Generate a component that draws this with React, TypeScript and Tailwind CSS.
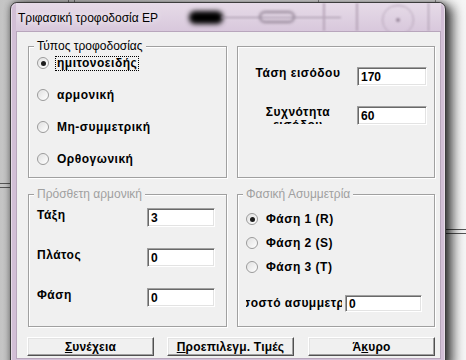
const sans = "font-['Liberation_Sans',Arial,sans-serif]";

function Radio({ checked }: { checked?: boolean }) {
  return (
    <span className="flex h-[12px] w-[12px] shrink-0 items-center justify-center rounded-full border border-[#9a9a9a] bg-gradient-to-br from-[#e0e0e0] to-white shadow-[inset_0_0_1px_#fff]">
      {checked && <span className="h-[5px] w-[5px] rounded-full bg-[#1c1c1c]" />}
    </span>
  );
}

function RadioRow({ label, checked, focused }: { label: string; checked?: boolean; focused?: boolean }) {
  return (
    <div className="flex h-[14px] items-center gap-[6px]">
      <Radio checked={checked} />
      <span
        className={`border px-[1px] text-[12px] font-bold leading-[13px] tracking-[0.5px] ${
          focused ? "border-dotted border-black" : "border-transparent"
        }`}
      >
        {label}
      </span>
    </div>
  );
}

function Field({ value, className }: { value: string; className: string }) {
  return (
    <div
      className={`flex items-center border border-t-[#a0a0a0] border-l-[#a0a0a0] border-b-white border-r-white bg-white pl-[3px] text-[12px] font-bold shadow-[inset_1px_1px_0_#696969,inset_-1px_-1px_0_#e3e3e3] ${className}`}
    >
      {value}
    </div>
  );
}

function Group({
  title,
  disabled,
  className,
  children,
}: {
  title?: string;
  disabled?: boolean;
  className: string;
  children: React.ReactNode;
}) {
  return (
    <div className={`relative border border-[#a0a0a0] shadow-[inset_1px_1px_0_#fff,1px_1px_0_#fff] ${className}`}>
      {title && (
        <span
          className={`absolute -top-[8px] left-[5px] bg-[#f0f0f0] px-[3px] text-[12px] leading-[14px] ${
            disabled ? "text-[#a0a0a0]" : "text-black"
          }`}
        >
          {title}
        </span>
      )}
      {children}
    </div>
  );
}

function Button({ children, className }: { children: React.ReactNode; className?: string }) {
  return (
    <div
      className={`flex h-[19px] w-[127px] items-center justify-center border border-t-white border-l-white border-b-[#505050] border-r-[#505050] bg-[#f0f0f0] text-[12px] font-bold tracking-[0.2px] shadow-[inset_-1px_-1px_0_#a0a0a0,inset_1px_1px_0_#e3e3e3] ${className ?? ""}`}
    >
      {children}
    </div>
  );
}

export default function App() {
  return (
    <div className={`relative h-[360px] w-[466px] overflow-hidden bg-gradient-to-r from-[#c4c4c4] via-[#f2f2f2] to-[#f6f6f6] ${sans} text-black`}>
      {/* desktop behind the dialog */}
      <div className="absolute left-[68px] top-0 h-[4px] w-[1px] bg-[#777]" />
      <div className="absolute left-[74px] top-0 h-[4px] w-[1px] bg-[#777]" />
      <div className="absolute left-[318px] top-0 h-[4px] w-[1px] bg-[#999]" />
      <div className="absolute left-[435px] top-0 h-[4px] w-[1px] bg-[#999]" />
      <div className="absolute left-0 top-[183px] h-[1px] w-[12px] bg-[#555]" />
      <div className="absolute left-0 top-[187px] h-[1px] w-[12px] bg-[#555]" />
      <div className="absolute right-0 top-[229px] h-[1px] w-[20px] bg-[#555]" />
      <div className="absolute right-0 top-[233px] h-[1px] w-[20px] bg-[#555]" />

      {/* window */}
      <div className="absolute left-[10px] top-[2px] flex h-[364px] w-[436px] flex-col rounded-t-[7px] border border-[#3c3c3c] bg-[#d2bfd6] pb-[6px] pl-[5px] pr-[4px] shadow-[0_0_6px_rgba(0,0,0,0.45),7px_3px_12px_rgba(0,0,0,0.7),inset_0_0_0_1px_rgba(255,255,255,0.45)]">
        <div className="relative flex h-[28px] shrink-0 items-center overflow-hidden pl-[2px] pt-[2px]">
          <div className="absolute -left-[5px] -right-[4px] top-0 h-[28px] bg-gradient-to-b from-[#e6dbe8] to-[#d8c8dc]" />
          <div className="absolute left-[173px] top-[8px] h-[13px] w-[34px] rounded-[6px] bg-black blur-[2.5px]" />
          <div className="absolute left-[243px] top-[8px] h-[12px] w-[36px] rounded-[6px] border-2 border-[#8d7f90] blur-[1.5px]" />
          <div className="absolute left-[205px] top-[14px] h-[1px] w-[120px] bg-[#9e8fa2] blur-[1px]" />
          <div className="absolute left-[307px] top-0 h-[28px] w-[2px] bg-[#b7a6ba] blur-[1px]" />
          <div className="absolute left-[340px] top-0 h-[28px] w-[2px] bg-[#b7a6ba] blur-[1px]" />
          <div className="absolute left-[366px] top-[2px] h-[30px] w-[32px] rounded-full border border-[#b4a3b7] blur-[1px]" />
          <div className="absolute left-[380px] top-[15px] h-[4px] w-[4px] rounded-full bg-[#9a8a9d] blur-[1px]" />
          <div className="absolute left-[412px] top-0 h-[28px] w-[1px] bg-[#a495a7] blur-[1px]" />
          <span className="relative text-[12px] leading-[14px] [text-shadow:0_0_6px_#fff]">
            Τριφασική τροφοδοσία ΕΡ
          </span>
        </div>

        <div className="flex-1 border border-[#b8a6bc] bg-[#f0f0f0] pl-[11px] pt-[14px]">
          <div className="flex gap-[10px]">
            <Group title="Τύπος τροφοδοσίας" className="h-[132px] w-[199px]">
              <div className="flex flex-col gap-[18px] pl-[8px] pt-[9px]">
                <RadioRow label="ημιτονοειδής" checked focused />
                <RadioRow label="αρμονική" />
                <RadioRow label="Μη-συμμετρική" />
                <RadioRow label="Ορθογωνική" />
              </div>
            </Group>
            <Group className="h-[132px] w-[198px]">
              <div className="flex flex-col gap-[20px] pl-[12px] pt-[20px]">
                <div className="flex items-start gap-[11px]">
                  <div className="h-[18px] w-[96px] overflow-hidden text-center text-[12px] font-bold leading-[13px] tracking-[0.5px]">
                    Τάση εισόδου
                  </div>
                  <Field value="170" className="h-[19px] w-[70px]" />
                </div>
                <div className="flex items-start gap-[11px]">
                  <div className="h-[18px] w-[96px] overflow-hidden text-center text-[12px] font-bold leading-[13px] tracking-[0.5px]">
                    Συχνότητα εισόδου
                  </div>
                  <Field value="60" className="h-[19px] w-[70px]" />
                </div>
              </div>
            </Group>
          </div>

          <div className="mt-[16px] flex gap-[10px]">
            <Group title="Πρόσθετη αρμονική" disabled className="h-[133px] w-[199px]">
              <div className="flex flex-col gap-[21px] pl-[8px] pt-[13px]">
                {[
                  ["Τάξη", "3"],
                  ["Πλάτος", "0"],
                  ["Φάση", "0"],
                ].map(([l, v]) => (
                  <div key={l} className="flex items-start">
                    <span className="mt-[1px] w-[110px] text-[12px] font-bold leading-[13px] tracking-[0.5px]">{l}</span>
                    <Field value={v} className="h-[19px] w-[68px]" />
                  </div>
                ))}
              </div>
            </Group>
            <Group title="Φασική Ασυμμετρία" disabled className="h-[133px] w-[198px]">
              <div className="flex flex-col gap-[10px] pl-[8px] pt-[17px]">
                <RadioRow label="Φάση 1 (R)" checked />
                <RadioRow label="Φάση 2 (S)" />
                <RadioRow label="Φάση 3 (T)" />
              </div>
              <div className="mt-[21px] flex items-center pl-[8px]">
                <div className="flex h-[15px] w-[96px] shrink-0 justify-center overflow-hidden whitespace-nowrap text-[12px] font-bold leading-[15px] tracking-[0.5px]">
                  Ποσοστό ασυμμετρίας
                </div>
                <Field value="0" className="ml-[3px] h-[17px] w-[77px]" />
              </div>
            </Group>
          </div>

          <div className="-ml-[1px] mt-[10px] flex">
            <Button>
              <span className="underline">Σ</span>υνέχεια
            </Button>
            <Button className="ml-[13px]">
              <span className="underline">Π</span>ροεπιλεγμ. Τιμές
            </Button>
            <Button className="ml-[14px]">
              Ά<span className="underline">κ</span>υρο
            </Button>
          </div>
        </div>
      </div>
    </div>
  );
}
